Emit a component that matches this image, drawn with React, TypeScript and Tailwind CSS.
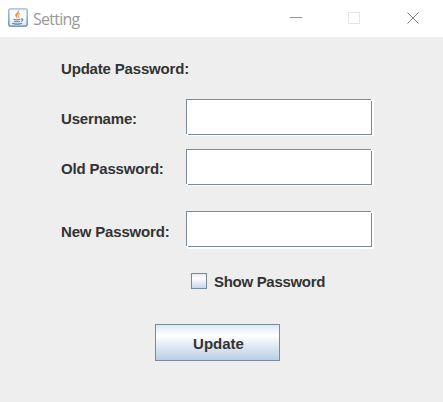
import React from "react";

function JavaIcon() {
  return (
    <svg width="20" height="20" viewBox="0 0 20 20" className="block shrink-0">
      <defs>
        <linearGradient id="plate" x1="0" y1="0" x2="0" y2="1">
          <stop offset="0" stopColor="#f3f8fb" />
          <stop offset="0.5" stopColor="#fdfefe" />
          <stop offset="1" stopColor="#d3e1ec" />
        </linearGradient>
        <linearGradient id="rim" x1="0" y1="0" x2="0" y2="1">
          <stop offset="0" stopColor="#9ab9d0" />
          <stop offset="1" stopColor="#5a83a8" />
        </linearGradient>
      </defs>
      <rect x="0.8" y="0.8" width="18.4" height="17.4" rx="1.6" fill="url(#plate)" stroke="url(#rim)" strokeWidth="1.3" />
      <path d="M9.9 2.300C11.400 4.500 6.900 5.400 7.500 7.500C7.800 8.600 8.800 9 9 10C9.700 8.700 8.300 7.900 9.300 6.500C10.300 5.200 11.800 4 9.900 2.300Z" fill="#ee8a3c" stroke="#ee8a3c" strokeWidth="0.5" />
      <path d="M12 5.500C9.500 6.500 10 7.300 10.500 8.100C10.900 8.800 10.500 9.500 9.900 10" fill="none" stroke="#ee8a3c" strokeWidth="1" />
      <path d="M5.500 11.200C7.500 12 10.500 12 12.300 11.200M6.200 13.200C8 13.900 10.400 13.900 11.900 13.200M4.300 15.300C6.800 16.400 11.800 16.400 14 15.200M12.900 10.900C15.700 10.500 15.300 12.700 12.900 13.300" fill="none" stroke="#5d86ac" strokeWidth="1.1" />
    </svg>
  );
}

function TitleBar() {
  return (
    <header className="flex h-[37px] items-start bg-white pl-2">
      <div className="flex h-9 items-center">
        <JavaIcon />
        <span className="ml-[5px] pt-0.5 font-['Open_Sans','Noto_Sans',sans-serif] text-base leading-5 font-normal tracking-[-0.75px] text-[#999999]">
          Setting
        </span>
      </div>
      <svg width="130" height="14" viewBox="0 0 130 14" fill="none" className="mt-[11px] mr-[23px] ml-auto block" shapeRendering="crispEdges">
        <path d="M0 6.500H12" stroke="#929292" />
        <rect x="58.500" y="1.500" width="11" height="11" stroke="#e6e6e6" />
        <path d="M117.500 1.500L128.500 12.500M128.500 1.500L117.500 12.500" stroke="#858585" shapeRendering="auto" />
      </svg>
    </header>
  );
}

interface FieldProps {
  label: string;
  type?: string;
  labelClass?: string;
  shadowClass?: string;
}

function Field({
  label,
  type = "text",
  labelClass = "pt-[3px]",
  shadowClass = "shadow-[1px_1px_0_white,2px_1px_0_white]",
}: FieldProps) {
  return (
    <label className="flex h-9 items-center">
      <span className={`w-[125px] shrink-0 ${labelClass}`}>{label}</span>
      <span className="relative block h-9 w-[186px]">
        <input
          type={type}
          className={`block h-9 w-[186px] rounded-none border border-[#7a8a99] bg-white px-1 outline-none ${shadowClass}`}
        />
        <i className="absolute top-0 right-0 h-0.5 w-px bg-white" />
        <i className="absolute bottom-0 left-0 h-px w-0.5 bg-white" />
      </span>
    </label>
  );
}

export default function App() {
  return (
    <main className="h-[402px] w-[443px] overflow-hidden bg-[#eeeeee] font-['Liberation_Sans',Arial,sans-serif] text-[15px] leading-5 font-bold tracking-[-0.18px] text-[#333333]">
      <TitleBar />
      <form className="pt-[22px] pl-[61px]" onSubmit={(e) => e.preventDefault()}>
        <h1>Update Password:</h1>
        <div className="mt-5 flex flex-col gap-3.5">
          <Field label="Username:" />
          <Field label="Old Password:" type="password" />
        </div>
        <div className="mt-[26px]">
          <Field
            label="New Password:"
            type="password"
            labelClass="pt-[5px]"
            shadowClass="shadow-[1px_1px_0_white,2px_2px_0_white]"
          />
        </div>
        <label className="mt-6 ml-[130px] flex h-5 items-center tracking-[-0.3px]">
          <input
            type="checkbox"
            className="block size-4 appearance-none border border-[#7a8a99] bg-linear-to-b from-[#e3ecf5] via-white via-30% to-[#c4d7ea]"
          />
          <span className="ml-[7px] pt-0.5">Show Password</span>
        </label>
        <button
          type="button"
          className="mt-[33px] ml-[94px] block h-[37px] w-[125px] border border-[#7a8a99] bg-linear-to-b from-[#dde8f3] via-white via-30% to-[#b8cfe5] pt-0.5 pl-0.5 tracking-normal"
        >
          Update
        </button>
      </form>
    </main>
  );
}
